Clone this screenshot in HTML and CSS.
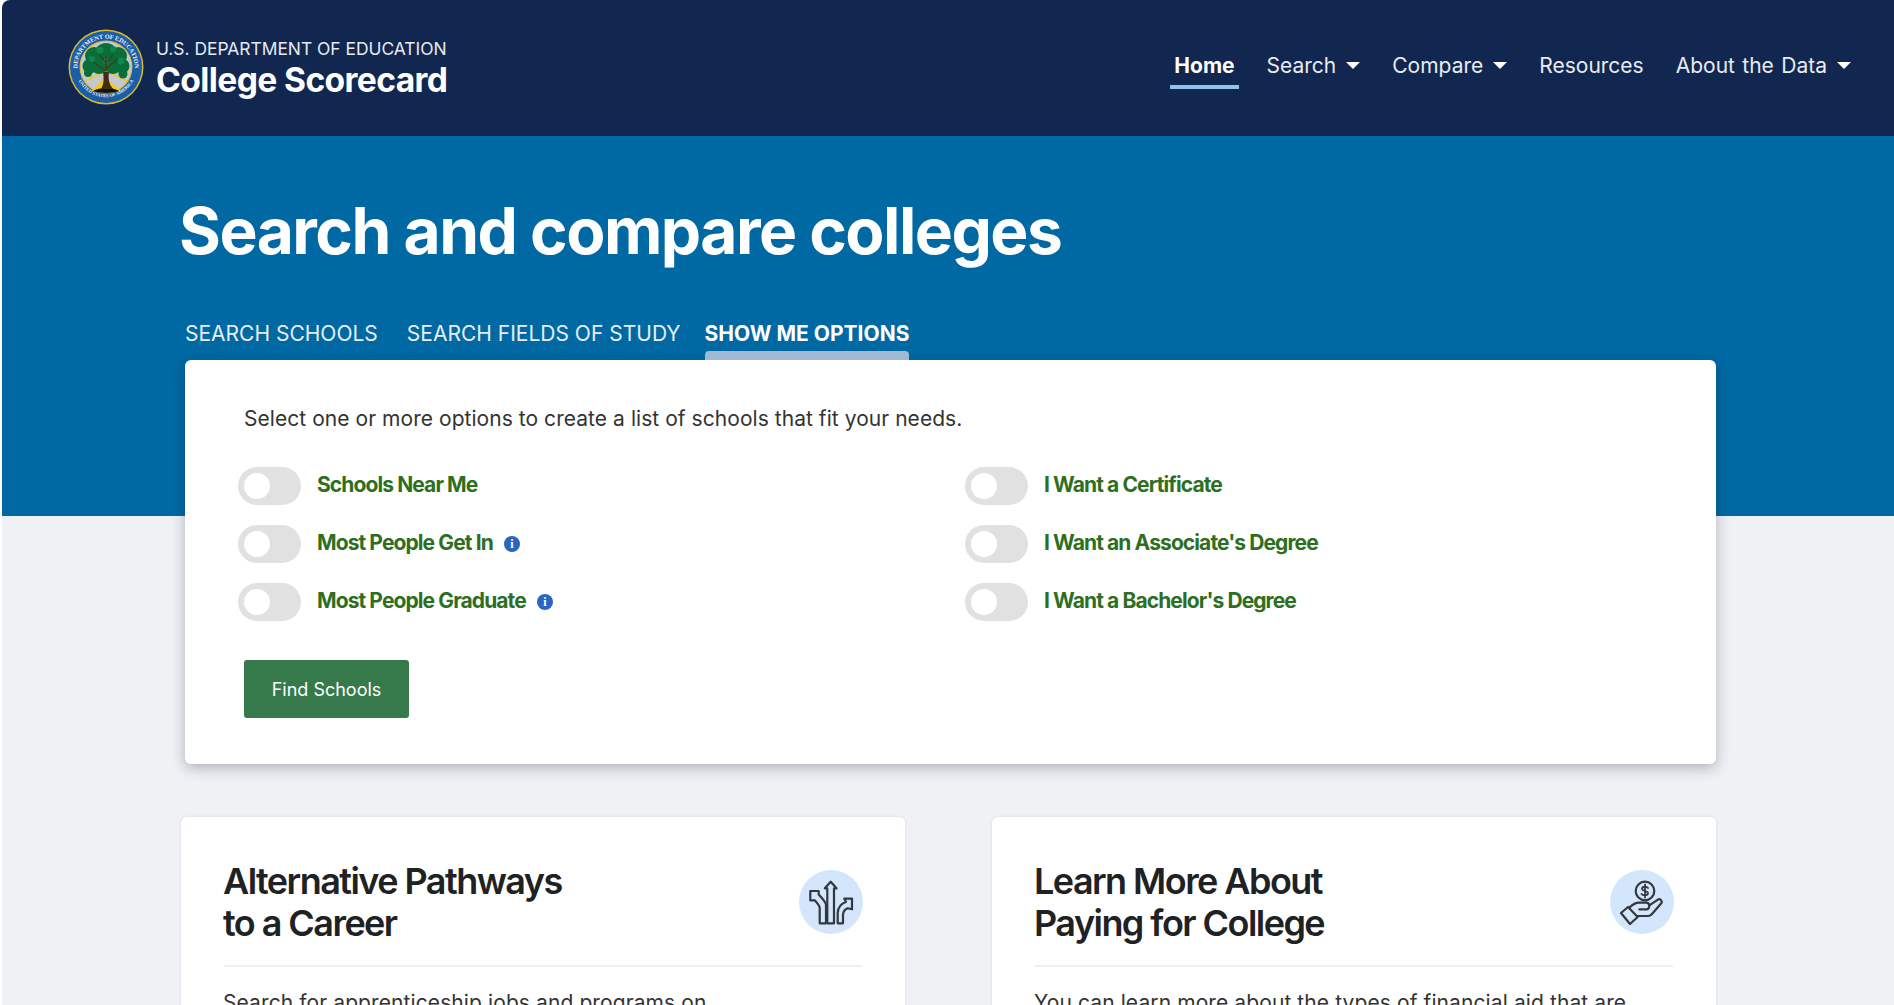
FILE: index.html
```html
<!DOCTYPE html>
<html lang="en">
<head>
    <meta charset="UTF-8">
    <meta name="viewport" content="width=device-width, initial-scale=1.0">
    <title>College Scorecard</title>
    <link rel="stylesheet" href="styles.css">
</head>
<body>
    <div class="page">
        <header class="site-header">
            <a class="brand" href="#">
                <svg class="seal" viewBox="0 0 76 76" aria-hidden="true">
                    <defs>
                        <path id="sealTop" d="M11.200 47.750A28.500 28.500 0 1 1 64.800 47.750"/>
                        <path id="sealBottom" d="M8 44a31 31 0 0 0 60 0" transform="translate(0 1)"/>
                    </defs>
                    <circle cx="38" cy="38" r="37.500" fill="#d9b92e"/>
                    <circle cx="38" cy="38" r="36" fill="#1b5da6"/>
                    <circle cx="38" cy="38" r="26.500" fill="#d9b92e"/>
                    <circle cx="38" cy="38" r="25.500" fill="#c3c8d2"/>
                    <text class="seal-text"><textPath href="#sealTop" startOffset="50%" text-anchor="middle">DEPARTMENT OF EDUCATION</textPath></text>
                    <text class="seal-text seal-text-small"><textPath href="#sealBottom" startOffset="50%" text-anchor="middle">UNITED STATES OF AMERICA</textPath></text>
                    <g stroke="#e8c92a" stroke-width="1.400">
                        <path d="M38 42 16 24M38 42 24 16M38 42 52 16M38 42 60 24M38 42 14 42M38 42 62 42M38 42 17 52M38 42 59 52"/>
                    </g>
                    <path d="M38 48 23 62h30z" fill="#f1cc1c"/>
                    <path d="M25 62c6-4 20-4 26 0-7 2.500-19 2.500-26 0z" fill="#14140f"/>
                    <path d="M33 60c3-5 3-10 2-17h6c-1 7 0 12 4 17z" fill="#3f2c12"/>
                    <g fill="#0a6e3a">
                        <circle cx="38" cy="26" r="12"/>
                        <circle cx="26" cy="27" r="9"/>
                        <circle cx="50" cy="27" r="9"/>
                        <circle cx="22" cy="37" r="7.500"/>
                        <circle cx="54" cy="37" r="7.500"/>
                        <circle cx="31" cy="37" r="8"/>
                        <circle cx="45" cy="37" r="8"/>
                        <circle cx="20" cy="44" r="4"/>
                        <circle cx="55" cy="45" r="4.500"/>
                    </g>
                    <g fill="#0c8a4a">
                        <circle cx="32" cy="21" r="3.500"/>
                        <circle cx="45" cy="20" r="3"/>
                        <circle cx="24" cy="30" r="3"/>
                        <circle cx="53" cy="32" r="3.500"/>
                        <circle cx="38" cy="32" r="3"/>
                    </g>
                    <path d="M38 46V27M38 42l-13-9M38 40l12-10M38 34l-7-9M38 34l7-8" stroke="#4a3414" stroke-width="1.100" fill="none"/>
                </svg>
                <span class="brand-text">
                    <span class="brand-dept">U.S. DEPARTMENT OF EDUCATION</span>
                    <span class="brand-name">College Scorecard</span>
                </span>
            </a>
            <nav class="main-nav">
                <a class="nav-link active" href="#">Home</a>
                <a class="nav-link caret" href="#">Search</a>
                <a class="nav-link caret" href="#">Compare</a>
                <a class="nav-link" href="#">Resources</a>
                <a class="nav-link caret" href="#">About the Data</a>
            </nav>
        </header>

        <main class="content">
            <h1>Search and compare colleges</h1>

            <div class="tabs">
                <a class="tab" href="#">SEARCH SCHOOLS</a>
                <a class="tab" href="#">SEARCH FIELDS OF STUDY</a>
                <a class="tab active" href="#">SHOW ME OPTIONS</a>
            </div>

            <section class="panel">
                <p class="panel-intro">Select one or more options to create a list of schools that fit your needs.</p>
                <div class="options">
                    <label class="option"><span class="switch"></span><span class="option-label">Schools Near Me</span></label>
                    <label class="option"><span class="switch"></span><span class="option-label">I Want a Certificate</span></label>
                    <label class="option"><span class="switch"></span><span class="option-label">Most People Get In</span><span class="info">i</span></label>
                    <label class="option"><span class="switch"></span><span class="option-label">I Want an Associate's Degree</span></label>
                    <label class="option"><span class="switch"></span><span class="option-label">Most People Graduate</span><span class="info">i</span></label>
                    <label class="option"><span class="switch"></span><span class="option-label">I Want a Bachelor's Degree</span></label>
                </div>
                <button class="find-btn">Find Schools</button>
            </section>

            <div class="cards">
                <article class="card">
                    <div class="card-head">
                        <h2>Alternative Pathways<br>to a Career</h2>
                        <span class="card-icon">
                            <svg viewBox="0 0 64 64" aria-hidden="true">
                                <path d="M28.300 53.300V18.300h-2.500L31.700 11.700l5.800 6.600H35V53.300z"/>
                                <path d="M27 53.300h-6.300V38c0-1.500-2-4.500-5-7.700H11.300V21h8.400v3.500c2 2.500 7.300 7.500 7.300 10.500z"/>
                                <path d="M38.700 53.300H44V45c0-3 2-5.500 4.700-6.700l4.300 1V28.700H45.300l1.700 3.300c-4 1-8.300 5-8.300 11z"/>
                            </svg>
                        </span>
                    </div>
                    <p>Search for apprenticeship jobs and programs on</p>
                </article>
                <article class="card">
                    <div class="card-head">
                        <h2>Learn More About<br>Paying for College</h2>
                        <span class="card-icon">
                            <svg viewBox="0 0 64 64" aria-hidden="true">
                                <circle cx="35" cy="21" r="9.300"/>
                                <path class="thin" d="M38 18c-1-1.500-5.500-2-6 .5-.5 3 6.500 1.500 6 5-.5 2.500-5.500 2-6.500.5M35 14.500v13"/>
                                <path d="M19.300 37.700c3-3 6.500-5 10-5h6.700c2 0 3 1 3.300 2.600l9-6c2-1 4.500 2 3 4L42 44c-1 1.200-2 2-4 2H27.700"/>
                                <path d="M29.300 39.300H37c1.500 0 2.300-1.500 2.300-4"/>
                                <path d="M11 43l7-6 9.700 10-7.700 7z"/>
                            </svg>
                        </span>
                    </div>
                    <p>You can learn more about the types of financial aid that are</p>
                </article>
            </div>
        </main>
    </div>
</body>
</html>
```
FILE: styles.css
```css
html, body {
    height: 100%;
}

body {
    margin: 0;
    overflow: hidden;
    background: #fff;
    font-family: Inter, 'Noto Sans', sans-serif;
}

a {
    color: inherit;
    text-decoration: none;
}

.page {
    margin-left: 2px;
    height: 100%;
    overflow: hidden;
    border-top-left-radius: 8px;
    background: #f0f1f5;
}

.site-header {
    display: flex;
    align-items: flex-start;
    justify-content: space-between;
    height: 136px;
    padding: 0 39px 0 66px;
    background: #11274f;
    color: #fff;
}

.brand {
    display: flex;
    align-items: center;
    gap: 12px;
    margin-top: 29px;
}

.seal {
    width: 76px;
    height: 76px;
}

.seal-text {
    font-family: 'Liberation Serif', serif;
    font-size: 6.200px;
    font-weight: 700;
    fill: #eef2f8;
}

.seal-text-small {
    font-size: 4.600px;
}

.brand-text {
    display: flex;
    flex-direction: column;
    margin-top: 4px;
}

.brand-dept {
    font-size: 17.400px;
    line-height: 22px;
    color: #e7ebf2;
}

.brand-name {
    font-size: 33.600px;
    line-height: 40px;
    font-weight: 700;
    letter-spacing: -0.6px;
}

.main-nav {
    display: flex;
    gap: 24px;
    margin-top: 48px;
}

.nav-link {
    display: flex;
    align-items: center;
    box-sizing: border-box;
    height: 41px;
    padding: 0 4px 2px;
    border-bottom: 4px solid transparent;
    font-size: 21px;
    word-spacing: 1.500px;
    color: #e8ebf1;
}

.nav-link.active {
    font-weight: 700;
    color: #fff;
    border-bottom-color: #8fc3ee;
}

.nav-link.caret::after {
    content: "";
    margin-left: 10px;
    border-left: 7px solid transparent;
    border-right: 7px solid transparent;
    border-top: 7px solid #fff;
}

.content {
    padding: 55px 178px 0 177px;
    height: 869px;
    box-sizing: border-box;
    background: linear-gradient(#0069a3 380px, #f0f1f5 380px);
}

h1 {
    margin: 0;
    font-size: 64px;
    line-height: 80px;
    font-weight: 700;
    letter-spacing: -1.500px;
    color: #fff;
}

.tabs {
    display: flex;
    margin: 37px 0 0 6px;
    height: 52px;
    font-size: 21px;
    color: #e8eef5;
}

.tab {
    display: flex;
    flex-direction: column;
    justify-content: space-between;
    padding-top: 13px;
    margin-right: 29px;
}

.tab.active {
    margin: 0 0 0 -5px;
    font-weight: 700;
    color: #fff;
}

.tab.active::after {
    content: "";
    height: 9px;
    border-radius: 4px 4px 0 0;
    background: #9db9d4;
}

.panel {
    margin-left: 6px;
    height: 404px;
    padding: 45px 59px 0;
    box-sizing: border-box;
    border-radius: 6px;
    background: #fff;
    box-shadow: 0 4px 14px rgba(20, 30, 50, 0.3);
}

.panel-intro {
    margin: 0;
    font-size: 21px;
    line-height: 28px;
    letter-spacing: 0.05px;
    color: #333;
}

.options {
    display: grid;
    grid-template-columns: 727px 1fr;
    row-gap: 20px;
    margin: 34px 0 0 -6px;
}

.option {
    display: flex;
    align-items: center;
    height: 38px;
}

.switch {
    position: relative;
    width: 63px;
    height: 38px;
    border-radius: 19px;
    background: #e1e1e1;
}

.switch::after {
    content: "";
    position: absolute;
    left: 6px;
    top: 6px;
    width: 26px;
    height: 26px;
    border-radius: 50%;
    background: #fff;
}

.option-label {
    margin: -4px 0 0 16px;
    font-size: 21px;
    font-weight: 700;
    letter-spacing: -0.900px;
    color: #2e6f1f;
}

.info {
    display: inline-flex;
    align-items: center;
    justify-content: center;
    width: 16px;
    height: 16px;
    margin-left: 11px;
    border-radius: 50%;
    background: #2a66c0;
    color: #fff;
    font: 700 12px 'Liberation Serif', serif;
}

.find-btn {
    display: block;
    width: 165px;
    height: 58px;
    margin-top: 39px;
    border: none;
    border-radius: 3px;
    background: #367a4c;
    color: #fff;
    font: 400 18px Inter, sans-serif;
}

.cards {
    display: grid;
    grid-template-columns: 724px 724px;
    gap: 87px;
    margin: 53px 0 0 2px;
}

.card {
    height: 260px;
    padding: 43px 43px 0;
    border-radius: 6px;
    background: #fff;
    box-shadow: 0 0 3px rgba(40, 60, 100, 0.12);
}

.card-head {
    display: flex;
    justify-content: space-between;
    padding-bottom: 21px;
    border-bottom: 2px solid #eceff4;
}

h2 {
    margin: 0 0 0 -1px;
    font-size: 36px;
    line-height: 42px;
    font-weight: 600;
    letter-spacing: -1.550px;
    color: #1f2225;
}

.card-icon {
    display: flex;
    align-items: center;
    justify-content: center;
    width: 64px;
    height: 64px;
    margin: 10px -1px 0 0;
    border-radius: 50%;
    background: #d3e6fb;
}

.card-icon svg {
    width: 64px;
    height: 64px;
    fill: none;
    stroke: #33383e;
    stroke-width: 2.200;
    stroke-linejoin: round;
    stroke-linecap: round;
}

.card-icon .thin {
    stroke-width: 1.800;
}

.card p {
    margin: 21px 0 0 -1px;
    font-size: 21px;
    line-height: 30px;
    letter-spacing: 0.1px;
    color: #333;
}
```
